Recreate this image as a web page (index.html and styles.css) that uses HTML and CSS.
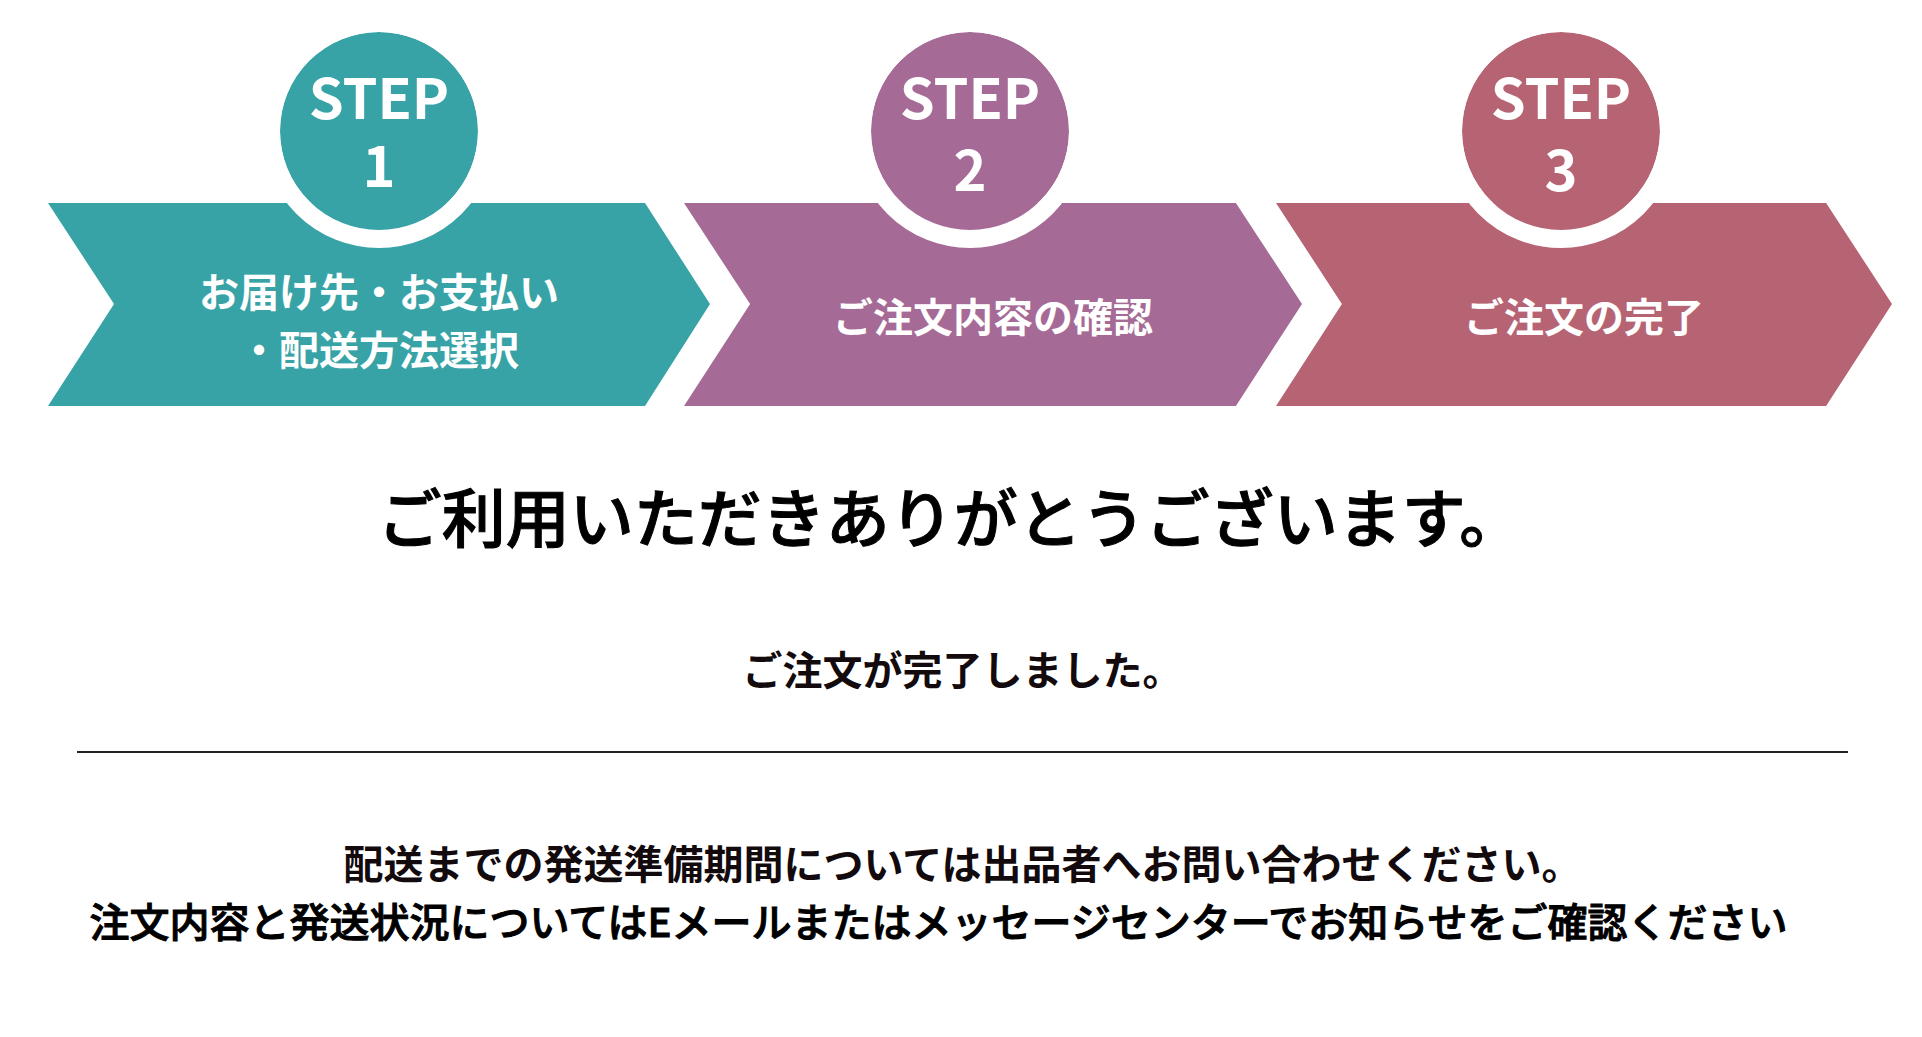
FILE: index.html
```html
<!DOCTYPE html>
<html lang="ja">
<head>
<meta charset="utf-8">
<title>ご注文の完了</title>
<link rel="stylesheet" href="styles.css">
</head>
<body>
<ol class="steps">
  <li class="step step-delivery">
    <svg class="arrow" viewBox="0 0 662 203" preserveAspectRatio="none" aria-hidden="true"><path d="M0 0H597L662 101L597 203H0L66 101Z"/></svg>
    <p class="badge">STEP<br>1</p>
    <p class="label">お届け先・お支払い<br>・配送方法選択</p>
  </li>
  <li class="step step-confirm">
    <svg class="arrow" viewBox="0 0 617 203" preserveAspectRatio="none" aria-hidden="true"><path d="M0 0H551L617 101L551 203H0L66 101Z"/></svg>
    <p class="badge">STEP<br>2</p>
    <p class="label">ご注文内容の確認</p>
  </li>
  <li class="step step-complete">
    <svg class="arrow" viewBox="0 0 617 203" preserveAspectRatio="none" aria-hidden="true"><path d="M0 0H551L617 101L551 203H0L66 101Z"/></svg>
    <p class="badge">STEP<br>3</p>
    <p class="label">ご注文の完了</p>
  </li>
</ol>
<main class="message">
  <h1 class="thanks">ご利用いただきありがとうございます。</h1>
  <p class="done">ご注文が完了しました。</p>
  <hr class="rule">
  <p class="note">配送までの発送準備期間については出品者へお問い合わせください。</p>
  <p class="note note-wide">注文内容と発送状況についてはEメールまたはメッセージセンターでお知らせをご確認ください</p>
</main>
</body>
</html>
```
FILE: styles.css
```css
* { box-sizing: border-box; }
body {
  margin: 0;
  background: #fff;
  color: #120a0c;
  font-family: "Noto Sans CJK JP", sans-serif;
  font-weight: 700;
}
p, h1 { margin: 0; }
.steps {
  display: grid;
  grid-template-columns: 636fr 592fr 616fr;
  margin: 0;
  padding: 203px 30px 0 48px;
  list-style: none;
}
.step {
  position: relative;
  height: 203px;
  display: flex;
  align-items: center;
  justify-content: center;
  color: #fff;
}
/* Each arrow's tip reaches into the notch of the next one. */
.step:not(:last-child) { margin-right: -26px; }
.step-delivery { --tone: #38a3a6; }
.step-confirm { --tone: #a56b96; }
.step-complete { --tone: #b66474; }
.arrow {
  position: absolute;
  inset: 0;
  width: 100%;
  height: 100%;
  fill: var(--tone);
}
.badge {
  position: absolute;
  bottom: 158px;
  left: calc(50% - 140px);
  width: 234px;
  height: 234px;
  padding-top: 27px;
  border: 18px solid #fff;
  border-radius: 50%;
  background: var(--tone);
  background-clip: padding-box;
  text-align: center;
  font-size: 56px;
  line-height: 72px;
}
.step-delivery .badge {
  left: calc(50% - 117px);
  padding-top: 29px;
  line-height: 68px;
}
.label {
  position: relative;
  padding-top: 20px;
  text-align: center;
  font-size: 40px;
  line-height: 58px;
}
.step-delivery .label { padding-top: 28px; }
.message {
  padding: 60px 74px 0 77px;
  text-align: center;
}
.thanks {
  padding-right: 24px;
  color: #000;
  font-size: 64px;
  font-weight: 500;
  line-height: 96px;
  -webkit-text-stroke: 1px #000;
}
.done { padding-top: 77px; font-size: 40px; line-height: 58px; }
.rule { margin: 54px 0 80px; border: 0; border-top: 2px solid #222; }
.note { font-size: 40px; line-height: 58px; }
.note-wide {
  padding-right: 48px;
  color: #000;
  font-weight: 500;
  -webkit-text-stroke: 1px #000;
}
```
